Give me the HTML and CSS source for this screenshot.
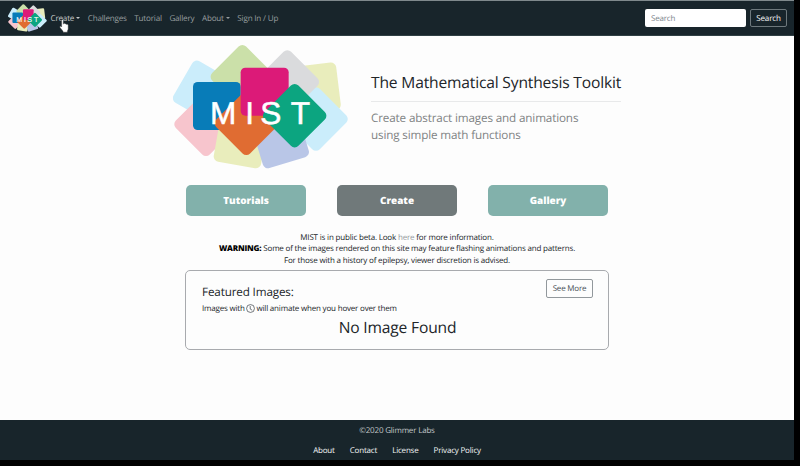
FILE: index.html
```html
<!DOCTYPE html>
<html lang="en">
<head>
<meta charset="utf-8">
<title>MIST</title>
<link rel="stylesheet" href="styles.css">
</head>
<body>
<div class="page">
  <nav class="navbar">
    <svg class="brand" viewBox="24 24 528 378"><use href="#logo-art"/></svg>
    <a class="link active caret">Create</a>
    <a class="link">Challenges</a>
    <a class="link">Tutorial</a>
    <a class="link">Gallery</a>
    <a class="link caret">About</a>
    <a class="link">Sign In / Up</a>
    <form class="search">
      <input type="text" placeholder="Search">
      <button type="button">Search</button>
    </form>
  </nav>
  <main>
    <section class="hero">
      <svg class="hero-logo" viewBox="24 24 528 378">
        <g id="logo-art">
          <rect x="-72" y="-72" width="144" height="144" rx="16" fill="#cbedfb" transform="translate(116 166) rotate(30)"/>
          <rect x="-72" y="-72" width="144" height="144" rx="16" fill="#e9edbc" transform="translate(449 158) rotate(-7)"/>
          <rect x="-72" y="-72" width="144" height="144" rx="16" fill="#cbedfb" transform="translate(453 249) rotate(45)"/>
          <rect x="-72" y="-72" width="144" height="144" rx="16" fill="#cbe0a9" transform="translate(232 122) rotate(45)"/>
          <rect x="-72" y="-72" width="144" height="144" rx="16" fill="#dadbdd" transform="translate(367 138) rotate(45)"/>
          <rect x="-72" y="-72" width="144" height="144" rx="16" fill="#f7c5cd" transform="translate(123 265) rotate(45)"/>
          <rect x="-72" y="-72" width="144" height="144" rx="16" fill="#e9edbc" transform="translate(227 316) rotate(10)"/>
          <rect x="-72" y="-72" width="144" height="144" rx="16" fill="#b9c6e7" transform="translate(346 311) rotate(-17)"/>
          <rect x="84" y="138" width="143" height="144" rx="14" fill="#087cb8"/>
          <rect x="-72" y="-72" width="144" height="144" rx="16" fill="#e06c32" transform="translate(244 262) rotate(45)"/>
          <rect x="227" y="95" width="144" height="144" rx="14" fill="#dc1a78"/>
          <rect x="-72" y="-72" width="144" height="144" rx="16" fill="#0ca580" transform="translate(389 239) rotate(45)"/>
          <text class="logo-text" y="264" x="135 241 286 377">MIST</text>
        </g>
      </svg>
      <div class="intro">
        <h1>The Mathematical Synthesis Toolkit</h1>
        <p>Create abstract images and animations<br>using simple math functions</p>
      </div>
    </section>
    <div class="actions">
      <a>Tutorials</a><a class="pressed">Create</a><a>Gallery</a>
    </div>
    <div class="notice">
      MIST is in public beta. Look <a>here</a> for more information.<br>
      <b>WARNING:</b> Some of the images rendered on this site may feature flashing animations and patterns.<br>
      For those with a history of epilepsy, viewer discretion is advised.
    </div>
    <section class="featured">
      <div class="featured-head">
        <h2>Featured Images:</h2>
        <button type="button">See More</button>
      </div>
      <p class="hint">Images with <svg class="clock" viewBox="0 0 16 16"><circle cx="8" cy="8" r="7"/><path d="M7.500 3.500V9L11 11"/></svg> will animate when you hover over them</p>
      <p class="empty">No Image Found</p>
    </section>
  </main>
  <footer>
    <div class="copy">©2020 Glimmer Labs</div>
    <div class="foot-links"><a>About</a><a>Contact</a><a>License</a><a>Privacy Policy</a></div>
  </footer>
</div>
<svg class="cursor" viewBox="0 0 11 14"><path d="M2.6 1.2c0-1 1.7-1 1.7 0v4l.3-.7c.5-.5 1.4-.2 1.5.5.5-.5 1.4-.2 1.5.5.6-.4 1.6 0 1.6.8v3.4c0 1-.6 1.600-.8 2.500v1H4v-1L1 8.500C.4 7.500 1.300 6.800 2 7.400l.6.6z"/></svg>
</body>
</html>
```
FILE: styles.css
```css
* { box-sizing: border-box; }
body { margin: 0; height: 466px; background: #000; overflow: hidden; font: 8px "Open Sans", sans-serif; letter-spacing: -.19px; color: #212529; text-rendering: geometricPrecision; }
h1, h2, p { margin: 0; font-weight: 400; }
button, input { font: inherit; letter-spacing: inherit; text-rendering: inherit; }
.page { width: 794px; height: 460px; display: flex; flex-direction: column; background: #fdfdfd; }
.navbar { height: 36px; border-top: 1px solid #7f898c; border-bottom: 1px solid #304044; background: #18252b; display: flex; align-items: center; padding: 0 7px 0 8px; }
.brand { width: 39px; height: 28px; margin-right: 3.500px; }
.logo-text { font: 95px "Liberation Sans", sans-serif; letter-spacing: 0; fill: #fff; stroke: #fff; stroke-width: 1.5px; }
.link { font-size: 8.1px; letter-spacing: -.2px; color: #979d9f; margin-right: 7.6px; padding-top: 1px; white-space: nowrap; }
.link.active { color: #c5c9ca; }
.caret::after { content: ""; display: inline-block; border: 2.3px solid transparent; border-top-color: currentColor; border-bottom: 0; margin-left: 2px; vertical-align: 2px; }
.search { margin-left: auto; display: flex; gap: 4px; }
.search input { width: 101px; height: 18px; border: 0; border-radius: 2px; background: #fff; padding: 1px 6px 0; }
.search input::placeholder { color: #7c858c; }
.search button { width: 37px; height: 18px; border: 1px solid #6e797d; border-radius: 2px; background: transparent; color: #f8f9fa; font-size: 8.1px; padding: 1px 0 0; }
main { flex: 1; padding: 8px 0 0 173px; }
.hero { display: flex; height: 127px; }
.hero-logo { width: 176px; height: 126px; }
.intro { margin-left: 22px; width: 250px; padding-top: 28px; }
h1 { font-size: 15.6px; letter-spacing: -.17px; line-height: 20px; height: 30px; border-bottom: 1px solid #e8e9ea; white-space: nowrap; }
.intro p { margin-top: 8px; font-size: 11.7px; letter-spacing: -.15px; line-height: 17px; color: #808384; white-space: nowrap; }
.actions { display: flex; gap: 31.5px; margin: 14px 0 0 13.300px; }
.actions a { width: 119.5px; height: 31px; border-radius: 5px; background: #82b1ab; color: #fff; font-size: 9.9px; letter-spacing: 0; font-weight: 800; line-height: 31px; text-align: center; }
.actions .pressed { background: #70797a; }
.notice { width: 424px; margin: 16px 0 0 12px; text-align: center; line-height: 11.3px; letter-spacing: -.18px; white-space: nowrap; }
.notice a { color: #969b9e; }
.notice b { font-weight: 800; color: #000; }
.featured { width: 424px; height: 80px; margin: 4px 0 0 12px; border: 1px solid #a8aaae; border-radius: 5px; padding: 8px 15px 0 16px; }
.featured-head { display: flex; justify-content: space-between; height: 24px; }
h2 { font-size: 11.7px; letter-spacing: -.15px; line-height: 27px; }
.featured button { width: 47px; height: 19px; border: 1px solid #92989c; border-radius: 2px; background: transparent; color: #495057; padding: 1px 0 0; }
.hint { line-height: 12px; white-space: nowrap; }
.clock { width: 9px; height: 9px; vertical-align: -2.500px; margin: 0 -.5px; fill: none; stroke: #343a40; stroke-width: 1.200; }
.empty { font-size: 15.6px; letter-spacing: -.17px; line-height: 20px; margin-top: 2px; text-align: center; }
footer { height: 40px; background: #18252b; color: #c2c7c9; text-align: center; }
.copy { line-height: 11px; padding-top: 5px; }
.foot-links { display: flex; justify-content: center; gap: 15px; line-height: 11px; margin-top: 9px; color: #f3f5f5; }
.cursor { position: absolute; left: 59px; top: 19px; width: 11px; height: 14px; fill: #fff; stroke: #333; stroke-width: .4; }
```
